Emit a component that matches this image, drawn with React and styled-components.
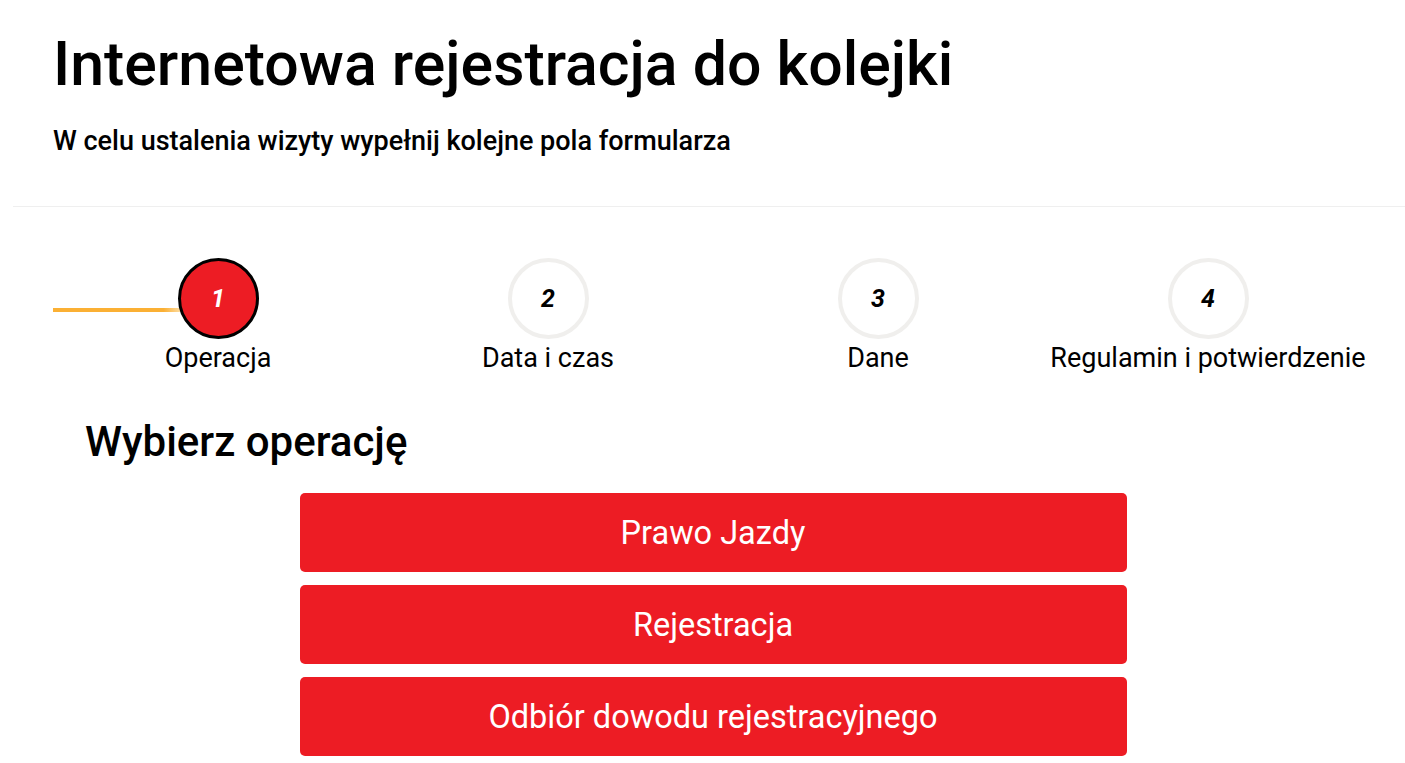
import styled, { createGlobalStyle } from "styled-components";

const GlobalStyle = createGlobalStyle`
  body {
    margin: 0;
    background: #fff;
    font-family: Roboto, "Liberation Sans", sans-serif;
    color: #000;
  }
`;

const Page = styled.div`
  width: 100%;
`;

const Header = styled.header`
  padding: 22px 53px 0;
  h1 {
    margin: 0;
    font-size: 60.8px;
    font-weight: 500;
    line-height: 86px;
  }
  p {
    margin: 18px 0 0;
    font-size: 27px;
    font-weight: 500;
    line-height: 30px;
  }
`;

const Divider = styled.hr`
  margin: 50px 0 0 13px;
  border: none;
  border-top: 1px solid #efefef;
`;

const Content = styled.main`
  width: 1320px;
  margin-left: 53px;
`;

const Steps = styled.ol`
  list-style: none;
  margin: 51px 0 0;
  padding: 0;
  display: grid;
  grid-template-columns: repeat(4, 1fr);
`;

const Step = styled.li`
  position: relative;
  display: flex;
  flex-direction: column;
  align-items: center;
  gap: 4px;
`;

const Progress = styled.span`
  position: absolute;
  left: 0;
  top: 50px;
  width: 130px;
  height: 4px;
  background: linear-gradient(to right, #fbb034 85%, #fde2b0);
`;

const Circle = styled.span`
  position: relative;
  z-index: 1;
  box-sizing: border-box;
  width: 81px;
  height: 81px;
  border-radius: 50%;
  display: flex;
  align-items: center;
  justify-content: center;
  font-size: 25px;
  font-weight: 700;
  font-style: italic;
  background: ${(p) => (p.$active ? "#ed1c24" : "#fff")};
  color: ${(p) => (p.$active ? "#fff" : "#000")};
  border: ${(p) => (p.$active ? "3px solid #000" : "4px solid #f0efed")};
`;

const StepLabel = styled.span`
  font-size: 27px;
  line-height: 30px;
`;

const SectionTitle = styled.h2`
  margin: 44px 0 0 32px;
  font-size: 42px;
  font-weight: 500;
  line-height: 50px;
`;

const Options = styled.div`
  margin-top: 26px;
  display: flex;
  flex-direction: column;
  align-items: center;
  gap: 13px;
`;

const OptionButton = styled.button`
  width: 827px;
  height: 79px;
  border: none;
  border-radius: 5px;
  background: #ed1c24;
  color: #fff;
  font-family: inherit;
  font-size: 32.5px;
  font-weight: 400;
  cursor: pointer;
`;

const steps = ["Operacja", "Data i czas", "Dane", "Regulamin i potwierdzenie"];
const options = ["Prawo Jazdy", "Rejestracja", "Odbiór dowodu rejestracyjnego"];

const App = () => {
  return (
    <Page>
      <GlobalStyle />
      <Header>
        <h1>Internetowa rejestracja do kolejki</h1>
        <p>W celu ustalenia wizyty wypełnij kolejne pola formularza</p>
      </Header>
      <Divider />
      <Content>
        <Steps>
          {steps.map((label, i) => (
            <Step key={label}>
              {i === 0 && <Progress />}
              <Circle $active={i === 0}>{i + 1}</Circle>
              <StepLabel>{label}</StepLabel>
            </Step>
          ))}
        </Steps>
        <SectionTitle>Wybierz operację</SectionTitle>
        <Options>
          {options.map((o) => (
            <OptionButton key={o}>{o}</OptionButton>
          ))}
        </Options>
      </Content>
    </Page>
  );
};

export default App;
